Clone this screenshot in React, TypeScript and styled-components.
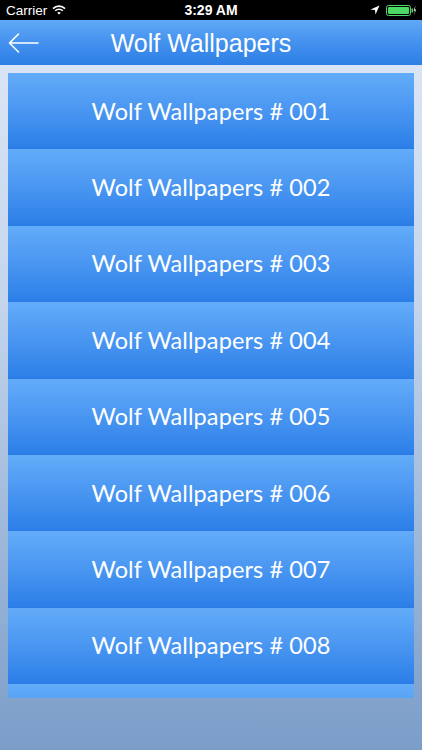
import React from "react";
import styled, { createGlobalStyle } from "styled-components";

const Global = createGlobalStyle`
  html, body { margin: 0; padding: 0; }
  body { background: #000; }
  * { box-sizing: border-box; }
`;

const Screen = styled.div`
  width: 422px;
  height: 750px;
  display: flex;
  flex-direction: column;
  overflow: hidden;
  background: linear-gradient(to bottom, #dfe9f7 0%, #c4d5ec 40%, #7b9dc8 100%);
  font-family: "Liberation Sans", Arial, sans-serif;
`;

const StatusBar = styled.div`
  height: 20px;
  flex: none;
  background: #000;
  color: #fff;
  display: grid;
  grid-template-columns: 1fr auto 1fr;
  align-items: center;
  padding: 0 6px;
  font-size: 13.5px;
`;

const StatusLeft = styled.div`
  display: flex;
  align-items: center;
  gap: 5px;
`;

const StatusTime = styled.div`
  font-weight: 600;
  font-size: 14px;
`;

const StatusRight = styled.div`
  display: flex;
  align-items: center;
  justify-content: flex-end;
  gap: 6px;
`;

const NavBar = styled.div`
  height: 45px;
  flex: none;
  background: linear-gradient(to bottom, #60a9f7 0%, #3f8ded 60%, #2d7fe6 100%);
  display: flex;
  align-items: center;
  position: relative;
  justify-content: center;
  padding-right: 20px;
`;

const BackButton = styled.div`
  position: absolute;
  left: 8px;
  top: 12px;
  display: flex;
`;

const NavTitle = styled.div`
  color: #fff;
  font-size: 25px;
  font-family: "Liberation Sans", Arial, sans-serif;
  margin-top: 1px;
`;

const ListArea = styled.div`
  margin: 8px 8px 0 8px;
  height: 625px;
  overflow: hidden;
  background: #5ea7f7;
  display: flex;
  flex-direction: column;
`;

const Row = styled.div`
  height: 76.4px;
  flex: none;
  background: linear-gradient(to bottom, #63acf9 0%, #4c98f2 45%, #2c7fe8 100%);
  border-bottom: 1px solid #2a7be4;
  display: flex;
  align-items: center;
  justify-content: center;
  color: #fff;
  font-family: Lato, "Open Sans", sans-serif;
  font-size: 23.5px;
  letter-spacing: 0.1px;
`;

const rows = ["001", "002", "003", "004", "005", "006", "007", "008"];

export default function App() {
  return (
    <Screen>
      <Global />
      <StatusBar>
        <StatusLeft>
          <span>Carrier</span>
          <svg width="14" height="10" viewBox="0 0 14 10">
            <path d="M1 3.6 A8.5 8.5 0 0 1 13 3.6" stroke="#fff" strokeWidth="1.6" fill="none" />
            <path d="M3.2 5.8 A5.4 5.4 0 0 1 10.8 5.8" stroke="#fff" strokeWidth="1.6" fill="none" />
            <path d="M7 9.6 L5.2 7.8 A2.6 2.6 0 0 1 8.8 7.8 Z" fill="#fff" />
          </svg>
        </StatusLeft>
        <StatusTime>3:29 AM</StatusTime>
        <StatusRight>
          <svg width="10" height="10" viewBox="0 0 10 10">
            <path d="M9.5 0.5 L0.5 4.5 L5 5 L5.5 9.5 Z" fill="#fff" />
          </svg>
          <svg width="30" height="11" viewBox="0 0 30 11">
            <rect x="0.5" y="0.5" width="24" height="10" rx="2" fill="none" stroke="#4cd964" strokeWidth="1" />
            <rect x="2" y="2" width="21" height="7" rx="1" fill="#4cd964" />
            <rect x="25.5" y="3.5" width="1.5" height="4" fill="#4cd964" />
            <path d="M29.5 0.5 L27.6 5.8 L29 5.8 L28 10.5 L30 4.6 L28.8 4.6 Z" fill="#fff" />
          </svg>
        </StatusRight>
      </StatusBar>
      <NavBar>
        <BackButton>
          <svg width="32" height="22" viewBox="0 0 32 22">
            <path d="M1.5 11 L30 11 M10.5 2 L1.5 11 L10.5 20" stroke="#fff" strokeWidth="1.6" fill="none" strokeLinecap="round" strokeLinejoin="round" />
          </svg>
        </BackButton>
        <NavTitle>Wolf Wallpapers</NavTitle>
      </NavBar>
      <ListArea>
        {rows.map((n) => (
          <Row key={n}>Wolf Wallpapers # {n}</Row>
        ))}
        <Row aria-hidden="true" />
      </ListArea>
    </Screen>
  );
}
